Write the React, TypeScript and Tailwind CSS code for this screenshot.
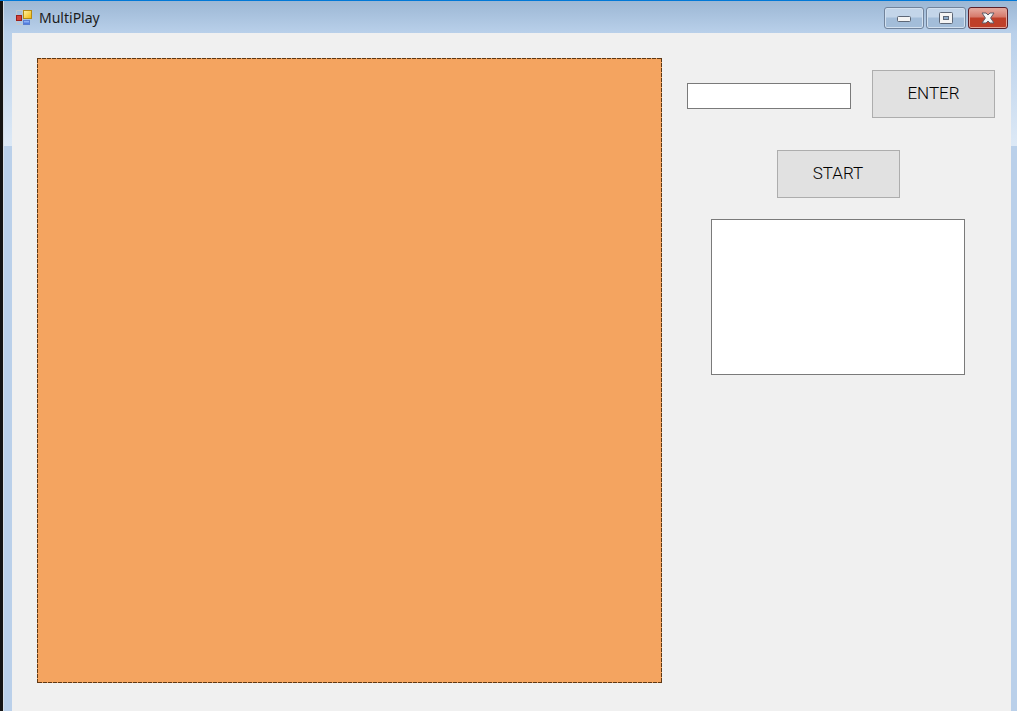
const captionButton =
  "flex h-[22px] w-10 items-center justify-center rounded-[3px] border border-[#71839b] bg-linear-to-b from-[#c3d5e9] from-45% to-[#a3bdd9] to-50% shadow-[inset_0_0_0_1px_#d3e1f0]";

const formButton =
  "h-12 w-[123px] shrink-0 border border-[#adadad] bg-[#e1e1e1] font-['Roboto','Liberation_Sans',sans-serif] text-[17px] font-light text-black";

function AppIcon() {
  return (
    <svg width="16" height="16" viewBox="0 0 16 16" aria-hidden="true">
      <defs>
        <linearGradient id="gold" x1="0" y1="0" x2="1" y2="1">
          <stop offset="0" stopColor="#fff3a8" />
          <stop offset="1" stopColor="#f2b705" />
        </linearGradient>
        <linearGradient id="blue" x1="0" y1="0" x2="0" y2="1">
          <stop offset="0" stopColor="#a9c8ff" />
          <stop offset="1" stopColor="#3464d6" />
        </linearGradient>
      </defs>
      <path d="M.5 .5h6v4M.5 .5v14h6" fill="none" stroke="#c3c8cc" />
      <rect x=".5" y="5.5" width="5" height="5" fill="#d2433a" stroke="#9c1f1b" />
      <rect x="7.5" y=".5" width="8" height="8" fill="url(#gold)" stroke="#b48a14" />
      <rect x="7.5" y="10.5" width="6" height="4" fill="url(#blue)" stroke="#5b7fd0" />
    </svg>
  );
}

function TitleBar() {
  return (
    <header className="flex h-8 items-start justify-between bg-linear-to-b from-[#9cb7d4] to-[#b9d0ea] pr-[9px] pl-3">
      <div className="flex items-center gap-[7px] pt-[7px]">
        <AppIcon />
        <h1 className="font-['Noto_Sans','Open_Sans',sans-serif] text-sm leading-5 text-[#1c1c1c]">MultiPlay</h1>
      </div>
      <div className="flex gap-0.5 pt-1.5">
        <button type="button" aria-label="Minimize" className={captionButton}>
          <svg width="14" height="6" viewBox="0 0 14 6" className="mt-0.5">
            <rect x=".5" y=".5" width="13" height="5" rx="1" fill="#f4f4f4" stroke="#5d6777" />
          </svg>
        </button>
        <button type="button" aria-label="Maximize" className={captionButton}>
          <svg width="14" height="12" viewBox="0 0 14 12">
            <rect x=".5" y=".5" width="13" height="11" rx="1" fill="#f4f4f4" stroke="#5d6777" />
            <rect x="4.5" y="4.5" width="5" height="3" fill="#8eabc9" stroke="#5d6777" />
          </svg>
        </button>
        <button
          type="button"
          aria-label="Close"
          className="flex h-[22px] w-10 items-center justify-center rounded-[3px] border border-[#5a1f2a] bg-linear-to-b from-[#e2a196] from-10% via-[#d6796a] via-45% to-[#bf3f29] to-50% shadow-[inset_0_0_0_1px_#e3a599]"
        >
          <svg width="14" height="12" viewBox="0 0 14 12">
            <path
              d="M1 1h4l2 2 2-2h4L9.6 6 13 11H9L7 9 5 11H1L4.400 6z"
              fill="#f6f6f6"
              stroke="#5f5a66"
              strokeLinejoin="round"
            />
          </svg>
        </button>
      </div>
    </header>
  );
}

function Board() {
  return (
    <div className="aspect-square min-w-0 flex-1 bg-[#f4a460]">
      <svg className="block size-full" aria-hidden="true">
        <rect width="100%" height="100%" fill="none" stroke="#5f3813" strokeWidth="2" strokeDasharray="4 1" />
      </svg>
    </div>
  );
}

export default function App() {
  return (
    <div className="flex min-h-screen flex-col border-t border-[#0078d7]">
      <div className="flex flex-1">
        <div className="w-[3px] shrink-0 bg-[#141414]" />
        <div className="flex min-w-0 flex-1 flex-col border-l border-[#d5dde6] bg-[#bad0ea]">
          <TitleBar />
          <div className="flex flex-1 bg-[linear-gradient(to_bottom,#b9d0ea,#dde9f6_113px,#bad0ea_113px)] pr-1.5 pl-2">
            <main className="flex min-w-0 flex-1 items-start gap-[25px] bg-[#f0f0f0] pt-[25px] pr-4 pb-7 pl-[25px]">
              <Board />
              <form className="w-[308px] shrink-0 pt-3" onSubmit={(e) => e.preventDefault()}>
                <div className="flex items-center gap-[21px]">
                  <input
                    type="text"
                    aria-label="Message"
                    className="mt-1 h-[26px] min-w-0 flex-1 border border-[#7a7a7a] bg-white px-1 text-sm outline-none"
                  />
                  <button type="submit" className={formButton}>
                    ENTER
                  </button>
                </div>
                <div className="mt-8 ml-6 flex w-[254px] flex-col items-center gap-[21px]">
                  <button type="button" className={formButton}>
                    START
                  </button>
                  <textarea
                    readOnly
                    aria-label="Log"
                    className="block h-[156px] w-full resize-none border border-[#7a7a7a] bg-white p-1 text-sm outline-none"
                  />
                </div>
              </form>
            </main>
          </div>
        </div>
      </div>
    </div>
  );
}
